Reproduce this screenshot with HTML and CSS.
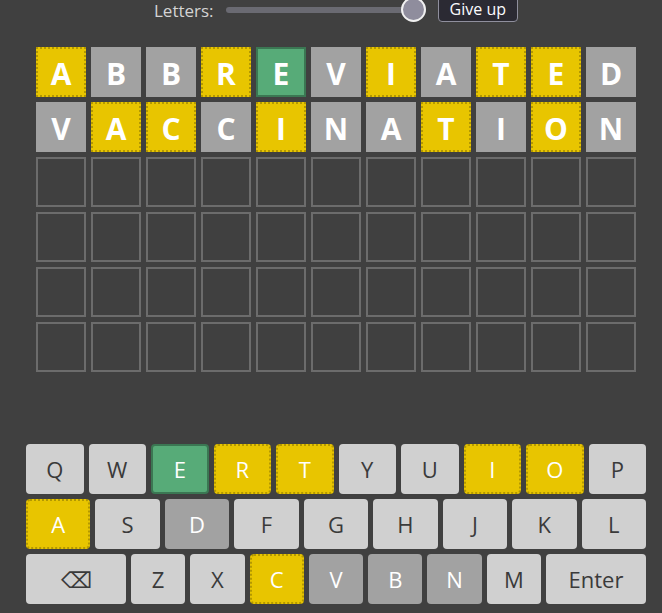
FILE: index.html
```html
<!DOCTYPE html>
<html lang="en">
<head>
  <meta charset="UTF-8">
  <title>Wordle</title>
  <link rel="stylesheet" href="styles.css">
</head>
<body>
  <div id="app">

    <!-- Controles -->
    <div class="controls">
      <label for="letters">Letters:</label>
      <input type="range" id="letters" min="4" max="11" value="11">
      <button class="give-up">Give up</button>
    </div>

    <!-- Tablero -->
    <div class="board">
      <div class="tile present">A</div>
      <div class="tile absent">B</div>
      <div class="tile absent">B</div>
      <div class="tile present">R</div>
      <div class="tile correct">E</div>
      <div class="tile absent">V</div>
      <div class="tile present">I</div>
      <div class="tile absent">A</div>
      <div class="tile present">T</div>
      <div class="tile present">E</div>
      <div class="tile absent">D</div>

      <div class="tile absent">V</div>
      <div class="tile present">A</div>
      <div class="tile present">C</div>
      <div class="tile absent">C</div>
      <div class="tile present">I</div>
      <div class="tile absent">N</div>
      <div class="tile absent">A</div>
      <div class="tile present">T</div>
      <div class="tile absent">I</div>
      <div class="tile present">O</div>
      <div class="tile absent">N</div>

      <div class="tile"></div><div class="tile"></div><div class="tile"></div><div class="tile"></div><div class="tile"></div><div class="tile"></div><div class="tile"></div><div class="tile"></div><div class="tile"></div><div class="tile"></div><div class="tile"></div>
      <div class="tile"></div><div class="tile"></div><div class="tile"></div><div class="tile"></div><div class="tile"></div><div class="tile"></div><div class="tile"></div><div class="tile"></div><div class="tile"></div><div class="tile"></div><div class="tile"></div>
      <div class="tile"></div><div class="tile"></div><div class="tile"></div><div class="tile"></div><div class="tile"></div><div class="tile"></div><div class="tile"></div><div class="tile"></div><div class="tile"></div><div class="tile"></div><div class="tile"></div>
      <div class="tile"></div><div class="tile"></div><div class="tile"></div><div class="tile"></div><div class="tile"></div><div class="tile"></div><div class="tile"></div><div class="tile"></div><div class="tile"></div><div class="tile"></div><div class="tile"></div>
    </div>

    <!-- Teclado -->
    <div class="keyboard">
      <div class="key-row">
        <button class="key">Q</button>
        <button class="key">W</button>
        <button class="key correct">E</button>
        <button class="key present">R</button>
        <button class="key present">T</button>
        <button class="key">Y</button>
        <button class="key">U</button>
        <button class="key present">I</button>
        <button class="key present">O</button>
        <button class="key">P</button>
      </div>
      <div class="key-row">
        <button class="key present">A</button>
        <button class="key">S</button>
        <button class="key absent">D</button>
        <button class="key">F</button>
        <button class="key">G</button>
        <button class="key">H</button>
        <button class="key">J</button>
        <button class="key">K</button>
        <button class="key">L</button>
      </div>
      <div class="key-row">
        <button class="key wide">&#9003;</button>
        <button class="key">Z</button>
        <button class="key">X</button>
        <button class="key present">C</button>
        <button class="key absent">V</button>
        <button class="key absent">B</button>
        <button class="key absent">N</button>
        <button class="key">M</button>
        <button class="key wide">Enter</button>
      </div>
    </div>

  </div>
</body>
</html>
```

FILE: styles.css
```css
body {
  margin: 0;
  background-color: #404040;
  font-family: "Open Sans", "Noto Sans", Arial, sans-serif;
}
#app {
  width: 620px;
  margin: 0 0 0 26px;
}
.controls {
  display: flex;
  align-items: center;
  justify-content: center;
  height: 26px;
  margin-top: -3px;
  color: #d4d4d4;
  font-size: 17px;
}
.controls input {
  -webkit-appearance: none;
  appearance: none;
  width: 200px;
  height: 24px;
  margin: 0 12px 0 12px;
  background: transparent;
}
.controls input::-webkit-slider-runnable-track {
  height: 6px;
  border-radius: 3px;
  background-color: #6a6a72;
}
.controls input::-webkit-slider-thumb {
  -webkit-appearance: none;
  width: 25px;
  height: 25px;
  margin-top: -10px;
  border-radius: 50%;
  border: 2px solid #f0f0f0;
  box-sizing: border-box;
  background-color: #8f8d9d;
}
.give-up {
  height: 26px;
  padding: 0 11px;
  margin-top: -2px;
  border: 1px solid #8f8f9d;
  border-radius: 4px;
  background-color: #2b2a33;
  color: #fbfbfe;
  font-family: inherit;
  font-size: 16px;
}
.board {
  display: grid;
  grid-template-columns: repeat(11, 50px);
  grid-auto-rows: 50px;
  gap: 5px;
  justify-content: center;
  margin-top: 24px;
}
.tile {
  display: flex;
  align-items: center;
  justify-content: center;
  box-sizing: border-box;
  border: 2px solid #6c6c6c;
  color: #fff;
  font-size: 30px;
  font-weight: bold;
  padding-top: 3px;
}
.tile.absent {
  background-color: #a2a2a2;
  border-color: #a2a2a2;
}
.tile.present {
  background-color: #e8c500;
  border: 2px dotted #b39800;
}
.tile.correct {
  background-color: #57ab78;
  border-color: #3b7753;
}
.keyboard {
  display: flex;
  flex-direction: column;
  gap: 5px;
  margin-top: 72px;
}
.key-row {
  display: flex;
  gap: 5px;
  height: 50px;
}
.key {
  flex: 1 1 0;
  min-width: 0;
  border: 2px solid transparent;
  border-radius: 4px;
  background-color: #d0d0d0;
  color: #3a3a3a;
  font-family: inherit;
  font-size: 22px;
  padding: 0;
}
.key.wide {
  flex: 0 0 100px;
}
.key.absent {
  background-color: #a2a2a2;
  color: #fff;
}
.key.present {
  background-color: #e8c500;
  border: 2px dotted #b39800;
  color: #fff;
}
.key.correct {
  background-color: #57ab78;
  border: 2px solid #3b7753;
  color: #fff;
}
```
